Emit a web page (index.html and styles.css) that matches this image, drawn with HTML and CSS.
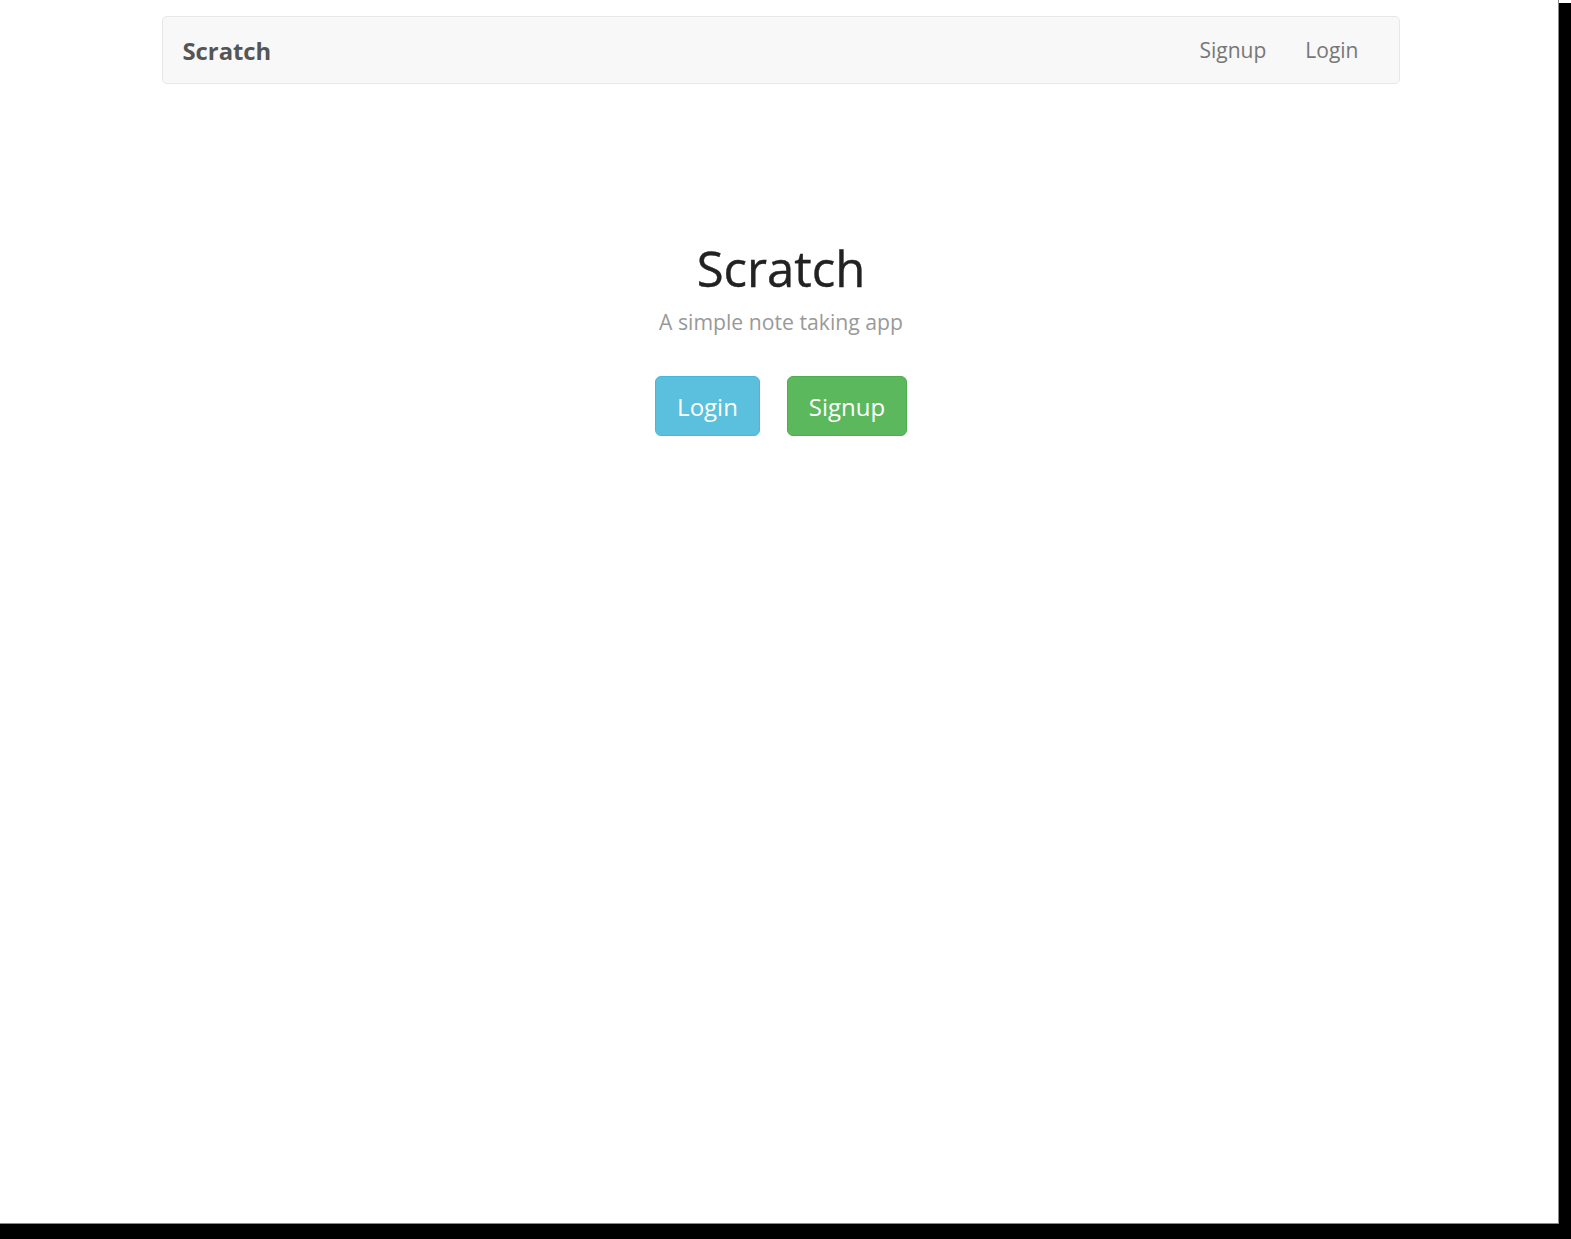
FILE: index.html
```html
<!DOCTYPE html>
<html lang="en">
<head>
<meta charset="utf-8">
<title>Scratch</title>
<link rel="stylesheet" href="styles.css">
</head>
<body>
<div class="frame">
  <div class="page">
    <div class="container">
      <nav class="navbar">
        <a class="brand" href="#">Scratch</a>
        <ul class="nav">
          <li><a href="#">Signup</a></li>
          <li><a href="#">Login</a></li>
        </ul>
      </nav>
      <main class="lander">
        <h1 class="title">Scratch</h1>
        <p class="tagline">A simple note taking app</p>
        <div class="actions">
          <a class="btn btn-info" href="#">Login</a>
          <a class="btn btn-success" href="#">Signup</a>
        </div>
      </main>
    </div>
  </div>
</div>
</body>
</html>
```

FILE: styles.css
```css
html, body {
  margin: 0;
  padding: 0;
  background: #000;
  height: 100%;
  overflow: hidden;
}
body {
  font-family: "Open Sans", "Liberation Sans", sans-serif;
}
.frame {
  width: 1571px;
  height: 1239px;
  background: linear-gradient(#fff, #fff) no-repeat 1559px 0 / 12px 3px, #000;
}
.page {
  width: 1558px;
  height: 1223px;
  background: #fff;
  border-right: 1px solid #8a8a8a;
  border-bottom: 1px solid #8a8a8a;
}
.container {
  width: 1238px;
  margin: 0 0 0 162px;
  padding-top: 16px;
}
.navbar {
  height: 66px;
  background: #f8f8f8;
  border: 1px solid #e7e7e7;
  border-radius: 5px;
  display: flex;
  align-items: center;
  justify-content: space-between;
  padding: 0 21px 0 19.5px;
}
.brand {
  font-size: 23.8px;
  font-weight: 700;
  color: #555;
  text-decoration: none;
  margin-top: 1px;
}
.nav {
  display: flex;
  list-style: none;
  margin: 0;
  padding: 0;
}
.nav a {
  display: block;
  font-size: 21px;
  color: #777;
  text-decoration: none;
  padding: 0 19.5px;
}
.lander {
  text-align: center;
  padding-top: 157px;
}
.title {
  font-size: 49px;
  font-weight: 400;
  line-height: 54px;
  margin: 0;
  color: #222;
  -webkit-text-stroke: 0.4px #222;
}
.tagline {
  font-size: 21.2px;
  line-height: 30px;
  color: #999;
  margin: 12px 0 0;
}
.actions {
  display: flex;
  justify-content: center;
  gap: 27px;
  margin-top: 39px;
}
.btn {
  display: block;
  height: 60px;
  box-sizing: border-box;
  font-size: 24px;
  line-height: 59px;
  color: #fff;
  text-decoration: none;
  border-radius: 6px;
  border: 1px solid;
}
.btn-info {
  width: 105px;
  background: #5bc0de;
  border-color: #46b8da;
}
.btn-success {
  width: 120px;
  background: #5cb85c;
  border-color: #4cae4c;
}
```
